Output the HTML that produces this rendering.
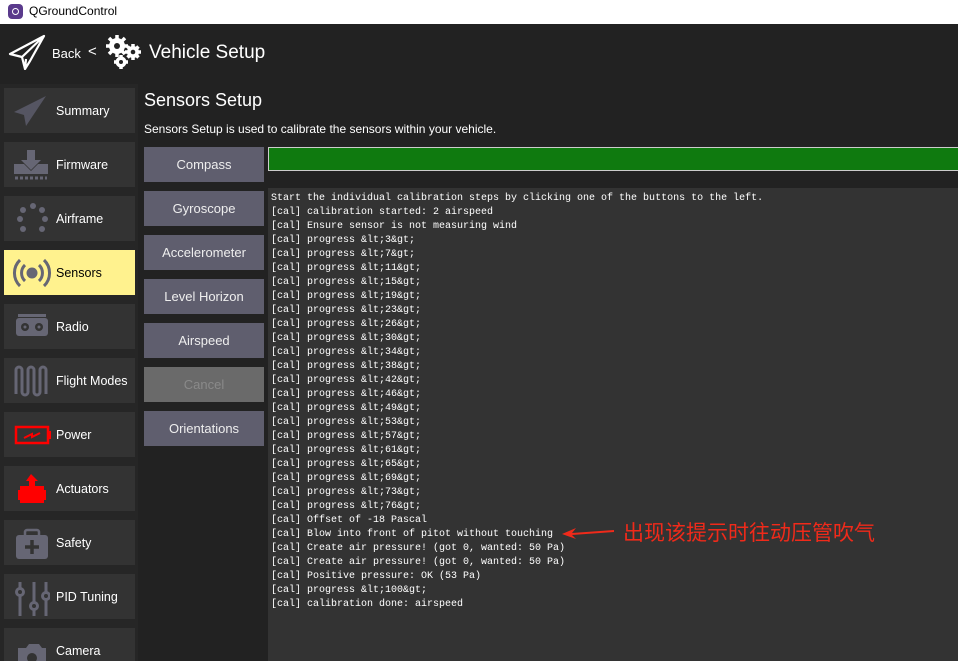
<!DOCTYPE html>
<html style="width:958px;height:661px;overflow:hidden"><head><meta charset="utf-8"><style>
*{margin:0;padding:0;box-sizing:border-box}
body{width:958px;height:661px;overflow:hidden;background:#222;font-family:"Liberation Sans","DejaVu Sans",sans-serif;position:relative;color:#fff}
.tb{position:absolute;left:0;top:0;width:958px;height:24px;background:#fff;color:#000;font-size:12px}
.tb .ic{position:absolute;left:8px;top:4px;width:15px;height:15px;border-radius:4px;background:#5a3a8c}
.tb .ic:after{content:"";position:absolute;left:4px;top:4px;width:5px;height:5px;border:1.5px solid #fff;border-radius:50%}
.tb span{position:absolute;left:29px;top:4px}
.side{position:absolute;left:0;top:84px;width:138px;height:577px;background:#262626}
.sb{position:absolute;left:4px;width:131px;height:45px;background:#333;font-size:12.5px;overflow:hidden}
.sb span{position:absolute;left:52px;top:16px}
.sb svg{position:absolute;left:8px;top:6px}
.sel{background:#fff28e;color:#000}
.btn{position:absolute;left:144px;width:120px;height:35px;background:#5f5e6e;font-size:13px;text-align:center;line-height:35px;color:#eee}
.con{position:absolute;left:268px;top:188px;width:690px;height:473px;background:#333;font-family:"Liberation Mono",monospace;font-size:10px;line-height:14px;padding:4px 0 0 3px;white-space:pre;color:#fff}
</style></head><body>
<div class="tb"><div class="ic"></div><span>QGroundControl</span></div>
<svg style="position:absolute;left:8px;top:34px" width="38" height="36" viewBox="0 0 38 36"><path d="M36 2 L2 20 L14 23 L17 35 L22 27 L36 2 Z M14 23 L36 2 M17 35 L18 25" fill="none" stroke="#fff" stroke-width="2.2" stroke-linejoin="round"/></svg>
<div style="position:absolute;left:52px;top:46px;font-size:13px">Back</div>
<div style="position:absolute;left:88px;top:43px;font-size:15px">&lt;</div>
<svg style="position:absolute;left:104px;top:34px" width="40" height="36" viewBox="0 0 40 36"><g fill="#fff"><circle cx="13" cy="12" r="8"/><circle cx="29" cy="18" r="6"/><circle cx="17" cy="28" r="5.5"/></g><g stroke="#fff" stroke-width="3.5"><path d="M13 1v22M2 12h22M5 4l16 16M21 4L5 20"/><path d="M29 10v16M21 18h16M23.5 12.5l11 11M34.5 12.5l-11 11"/><path d="M17 21v14M10 28h14"/></g><g fill="#222"><circle cx="13" cy="12" r="3"/><circle cx="29" cy="18" r="2.3"/><circle cx="17" cy="28" r="2"/></g></svg>
<div style="position:absolute;left:149px;top:42px;font-size:19px">Vehicle Setup</div>
<div class="side"></div>
<div class="sb" style="top:88px"><svg width="36" height="34"><path d="M34 2 L2 18 L12 21 L14 32 L34 2Z" fill="#555562"/></svg><span>Summary</span></div>
<div class="sb" style="top:142px"><svg width="38" height="34"><path d="M15 2h8v10h6l-10 10-10-10h6z M2 16h10l7 7 7-7h10v10H2z" fill="#666674"/><path d="M3 30h32" stroke="#666674" stroke-width="3" stroke-dasharray="3 2"/></svg><span>Firmware</span></div>
<div class="sb" style="top:196px"><svg width="38" height="34" fill="#666674"><circle cx="21" cy="4" r="3"/><circle cx="30" cy="8" r="3"/><circle cx="33" cy="17" r="3"/><circle cx="30" cy="27" r="3"/><circle cx="11" cy="27" r="3"/><circle cx="8" cy="17" r="3"/><circle cx="11" cy="8" r="3"/></svg><span>Airframe</span></div>
<div class="sb sel" style="top:250px"><svg width="40" height="34" fill="none" stroke="#666674" stroke-width="3"><circle cx="20" cy="17" r="4" fill="#666674"/><path d="M13 9a11 11 0 0 0 0 16M27 9a11 11 0 0 1 0 16M8 4a18 18 0 0 0 0 26M32 4a18 18 0 0 1 0 26"/></svg><span>Sensors</span></div>
<div class="sb" style="top:304px"><svg width="38" height="34"><rect x="4" y="8" width="32" height="18" rx="3" fill="#666674"/><rect x="6" y="4" width="28" height="3" fill="#666674"/><circle cx="13" cy="17" r="4" fill="#333"/><circle cx="27" cy="17" r="4" fill="#333"/><circle cx="13" cy="17" r="1.5" fill="#666674"/><circle cx="27" cy="17" r="1.5" fill="#666674"/></svg><span>Radio</span></div>
<div class="sb" style="top:358px"><svg width="38" height="34" fill="none" stroke="#666674" stroke-width="3"><path d="M4 30V6a3 3 0 0 1 6 0v22a3 3 0 0 0 6 0V6a3 3 0 0 1 6 0v22a3 3 0 0 0 6 0V6a3 3 0 0 1 6 0v24"/></svg><span>Flight Modes</span></div>
<div class="sb" style="top:412px"><svg width="40" height="34"><rect x="4" y="9" width="32" height="16" fill="none" stroke="#f00" stroke-width="2.5"/><rect x="36" y="13" width="3" height="8" fill="#f00"/><path d="M12 20l8-4v3l8-4" stroke="#f00" stroke-width="2" fill="none"/></svg><span>Power</span></div>
<div class="sb" style="top:466px"><svg width="38" height="36"><path d="M19 2l-5 7h3v5H8v4H6v10h2v3h24v-3h2V18h-2v-4h-9V9h3z" fill="#f00"/></svg><span>Actuators</span></div>
<div class="sb" style="top:520px"><svg width="38" height="36"><rect x="4" y="9" width="32" height="24" rx="3" fill="#666674"/><rect x="13" y="4" width="14" height="7" rx="2" fill="none" stroke="#666674" stroke-width="2.5"/><path d="M20 14v14M13 21h14" stroke="#333" stroke-width="3.5"/></svg><span>Safety</span></div>
<div class="sb" style="top:574px"><svg width="38" height="36" stroke="#666674" stroke-width="3" fill="#333"><path d="M8 2v34M22 2v34M34 2v34"/><circle cx="8" cy="12" r="3.5"/><circle cx="22" cy="26" r="3.5"/><circle cx="34" cy="16" r="3.5"/></svg><span>PID Tuning</span></div>
<div class="sb" style="top:628px"><svg width="38" height="34"><path d="M6 14h8l3-4h10l3 4h4v20H6z" fill="#666674"/><circle cx="20" cy="24" r="5" fill="#333"/></svg><span>Camera</span></div>
<div style="position:absolute;left:144px;top:90px;font-size:18px">Sensors Setup</div>
<div style="position:absolute;left:144px;top:122px;font-size:12px">Sensors Setup is used to calibrate the sensors within your vehicle.</div>
<div class="btn" style="top:147px">Compass</div>
<div class="btn" style="top:191px">Gyroscope</div>
<div class="btn" style="top:235px">Accelerometer</div>
<div class="btn" style="top:279px">Level Horizon</div>
<div class="btn" style="top:323px">Airspeed</div>
<div class="btn" style="top:367px;background:#6a6a6a;color:#8a8a8a">Cancel</div>
<div class="btn" style="top:411px">Orientations</div>
<div style="position:absolute;left:268px;top:147px;width:690px;height:24px;background:#0f7a0f;border:1px solid #ccc;border-right:none"></div>
<div class="con">Start the individual calibration steps by clicking one of the buttons to the left.
[cal] calibration started: 2 airspeed
[cal] Ensure sensor is not measuring wind
[cal] progress &amp;lt;3&amp;gt;
[cal] progress &amp;lt;7&amp;gt;
[cal] progress &amp;lt;11&amp;gt;
[cal] progress &amp;lt;15&amp;gt;
[cal] progress &amp;lt;19&amp;gt;
[cal] progress &amp;lt;23&amp;gt;
[cal] progress &amp;lt;26&amp;gt;
[cal] progress &amp;lt;30&amp;gt;
[cal] progress &amp;lt;34&amp;gt;
[cal] progress &amp;lt;38&amp;gt;
[cal] progress &amp;lt;42&amp;gt;
[cal] progress &amp;lt;46&amp;gt;
[cal] progress &amp;lt;49&amp;gt;
[cal] progress &amp;lt;53&amp;gt;
[cal] progress &amp;lt;57&amp;gt;
[cal] progress &amp;lt;61&amp;gt;
[cal] progress &amp;lt;65&amp;gt;
[cal] progress &amp;lt;69&amp;gt;
[cal] progress &amp;lt;73&amp;gt;
[cal] progress &amp;lt;76&amp;gt;
[cal] Offset of -18 Pascal
[cal] Blow into front of pitot without touching
[cal] Create air pressure! (got 0, wanted: 50 Pa)
[cal] Create air pressure! (got 0, wanted: 50 Pa)
[cal] Positive pressure: OK (53 Pa)
[cal] progress &amp;lt;100&amp;gt;
[cal] calibration done: airspeed</div>
<svg style="position:absolute;left:562px;top:526px" width="52" height="14"><path d="M0 8 L14 2 L10 7 L52 4 L52 6 L10 9 L14 13Z" fill="#f02a1a"/></svg>
<div style="position:absolute;left:623px;top:517px;font-size:21px;color:#f02a1a;font-family:'Liberation Sans','Noto Sans CJK SC',sans-serif">出现该提示时往动压管吹气</div>
</body></html>
